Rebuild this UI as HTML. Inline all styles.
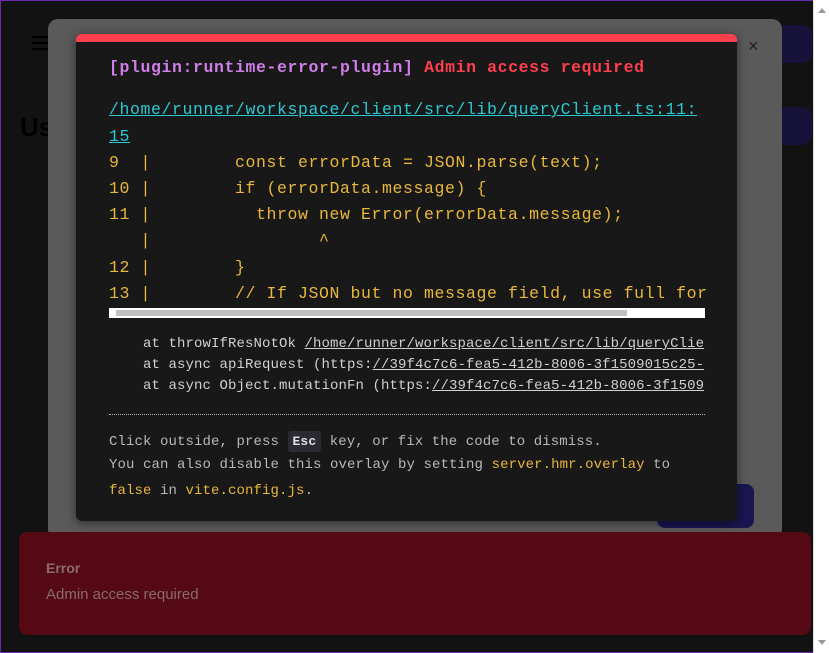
<!DOCTYPE html>
<html><head><meta charset="utf-8"><style>
*{margin:0;padding:0;box-sizing:border-box}
body{width:829px;height:653px;overflow:hidden;background:#121212;position:relative;font-family:"Liberation Sans",sans-serif}
.frame{position:absolute;inset:0;border:1px solid #6a2bb0;border-right:none}
.sb{position:absolute;right:0;top:0;width:16px;height:653px;background:#fff;border-left:1px solid #ddd}
.gray{position:absolute;left:48px;top:19px;width:734px;height:520px;background:#5a5a5a;border-radius:10px}
.ov{position:absolute;left:76px;top:34px;width:661px;height:487px;background:#181818;border-top:8px solid #ff3e4e;border-radius:6px;box-shadow:0 2px 10px rgba(0,0,0,.5);overflow:hidden}
.m{font-family:"Liberation Mono",monospace;font-size:16.5px;letter-spacing:0.6px;position:absolute;left:33px;white-space:pre;color:#e8b73b}
.s{font-family:"Liberation Mono",monospace;font-size:14px;letter-spacing:0.1px;position:absolute;left:67px;white-space:pre;color:#d0d0d0}
.f{font-family:"Liberation Mono",monospace;font-size:14px;letter-spacing:0.1px;position:absolute;left:33px;white-space:pre;color:#b8b8b8}
u{text-decoration:underline}
.toast{position:absolute;left:19px;top:532px;width:792px;height:103px;background:#540914;border-radius:8px}
</style></head><body>
<div class="frame"></div>
<div style="position:absolute;left:32px;top:36px;width:16px;height:2px;background:#000;box-shadow:0 6px 0 #000,0 12px 0 #000"></div>
<div style="position:absolute;left:20px;top:112px;font-size:26px;font-weight:bold;color:#000">Us</div>
<div style="position:absolute;left:782px;top:25px;width:30px;height:38px;background:#16123a;border-radius:0 10px 10px 0"></div>
<div style="position:absolute;left:782px;top:107px;width:30px;height:38px;background:#16123a;border-radius:0 10px 10px 0"></div>
<div class="gray"></div>
<div style="position:absolute;left:657px;top:484px;width:97px;height:44px;background:#1a1650;border-radius:8px"></div>
<div style="position:absolute;left:748px;top:36px;color:#222;font-size:18px">×</div>
<div class="ov">
<div class="m" style="top:16px;font-weight:bold"><span style="color:#cf7ee8">[plugin:runtime-error-plugin]</span> <span style="color:#ff3e4e">Admin access required</span></div>
<div class="m" style="top:58px;color:#2bc8d2"><u>/home/runner/workspace/client/src/lib/queryClient.ts:11:</u></div>
<div class="m" style="top:85px;color:#2bc8d2"><u>15</u></div>
<div class="m" style="top:111px">9  |        const errorData = JSON.parse(text);</div>
<div class="m" style="top:137px">10 |        if (errorData.message) {</div>
<div class="m" style="top:163px">11 |          throw new Error(errorData.message);</div>
<div class="m" style="top:189px">   |                ^</div>
<div class="m" style="top:216px">12 |        }</div>
<div class="m" style="top:242px">13 |        // If JSON but no message field, use full for</div>
<div style="position:absolute;left:33px;top:266px;width:596px;height:10px;background:#fff"><div style="position:absolute;left:7px;top:2px;width:511px;height:6px;background:#c0c0c0"></div></div>
<div class="s" style="top:294px">at throwIfResNotOk <u>/home/runner/workspace/client/src/lib/queryClie</u></div>
<div class="s" style="top:315px">at async apiRequest (https:<u>//39f4c7c6-fea5-412b-8006-3f1509015c25-</u></div>
<div class="s" style="top:336px">at async Object.mutationFn (https:<u>//39f4c7c6-fea5-412b-8006-3f1509</u></div>
<div style="position:absolute;left:33px;top:372px;width:596px;border-top:1px dotted #aaa"></div>
<div class="f" style="top:389px">Click outside, press <span style="display:inline-block;background:#2a2a33;border-radius:3px;padding:3px 5px;color:#ddd;font-weight:bold;font-size:13px;vertical-align:middle">Esc</span> key, or fix the code to dismiss.</div>
<div class="f" style="top:415px">You can also disable this overlay by setting <span style="color:#e8b73b">server.hmr.overlay</span> to</div>
<div class="f" style="top:441px"><span style="color:#e8b73b">false</span> in <span style="color:#e8b73b">vite.config.js</span>.</div>
</div>
<div class="toast">
<div style="position:absolute;left:27px;top:28px;color:#8a6a6e;font-size:14px;font-weight:bold">Error</div>
<div style="position:absolute;left:27px;top:54px;color:#8a6a6e;font-size:15px">Admin access required</div>
</div>
<div class="sb"><div style="position:absolute;left:4px;top:8px;border:4px solid transparent;border-bottom:5px solid #999;border-top:none"></div><div style="position:absolute;left:4px;bottom:8px;border:4px solid transparent;border-top:5px solid #999;border-bottom:none"></div></div>
</body></html>
